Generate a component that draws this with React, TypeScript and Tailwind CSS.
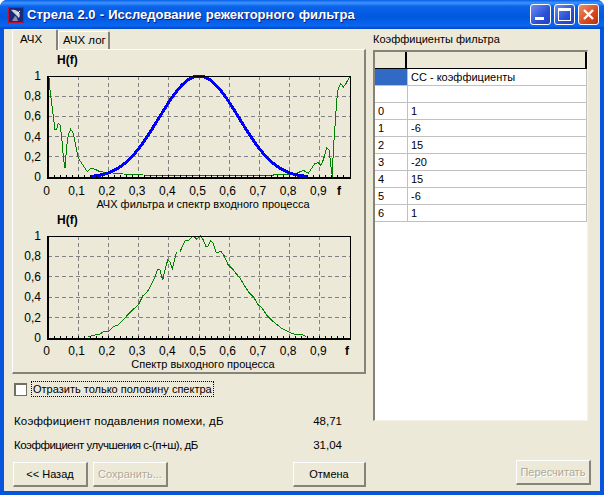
const green1: [number, number][] = [
  [147, 55], [150, 90], [155, 130], [160, 170], [165, 210], [170, 208], [175, 190], [180, 195], [185, 230], [190, 290],
  [195, 325], [200, 260], [205, 225], [212, 208], [220, 220], [228, 260], [235, 295], [245, 310], [255, 325], [262, 335],
  [272, 325], [285, 328], [300, 335], [330, 338], [370, 342], [430, 345], [500, 347], [600, 347],
];
const green1b: [number, number][] = [
  [60, 347], [280, 347], [280, 343], [330, 344], [350, 340], [370, 331], [385, 340], [395, 325], [405, 310], [415, 308], [422, 316],
  [430, 300], [440, 263], [447, 270], [453, 320], [457, 350], [460, 270], [465, 200], [470, 120], [475, 85], [482, 70],
  [490, 82], [497, 72], [510, 48],
];
const green2: [number, number][] = [
  [265, 380], [285, 375], [300, 372], [310, 365], [325, 365], [340, 350], [355, 345], [370, 330], [385, 312], [400, 298],
  [415, 285], [428, 258], [440, 248], [455, 222], [465, 200], [473, 178], [480, 180], [488, 210], [495, 180], [503, 150],
  [510, 155], [517, 177], [530, 125],
];
const green2b: [number, number][] = [
  [0, 125], [15, 92], [28, 90], [40, 78], [50, 88], [62, 77], [70, 90], [77, 108], [84, 108], [92, 92], [100, 100],
  [108, 127], [124, 125], [133, 138], [143, 162], [160, 180], [180, 205], [205, 245], [220, 260], [235, 285], [245, 292],
  [260, 316], [280, 335], [305, 355], [330, 368], [350, 375], [365, 373], [378, 380],
];

// zoom crop coords -> svg coords (svg origin is 13,52 for top chart and 13,212 for lower)
const top = (a: [number, number][], dx: number) =>
  a.map(([x, y]) => `${(dx + x / 3 - 13).toFixed(1)},${(60 + y / 3 - 52).toFixed(1)}`).join(" ");
const bottom = (a: [number, number][], dx: number) =>
  a.map(([x, y]) => `${(dx + x / 3 - 13).toFixed(1)},${(210 + y / 3 - 212).toFixed(1)}`).join(" ");

const blue = Array.from({ length: 91 }, (_, i) => {
  const f = 0.14 + (i * 0.72) / 90;
  const h = Math.pow(Math.sin(Math.PI * f), 6);
  return `${(35 + f * 302).toFixed(1)},${(125 - h * 101).toFixed(1)}`;
}).join(" ");

const rows = ["0", "1", "2", "3", "4", "5", "6"];
const vals = ["1", "-6", "15", "-20", "15", "-6", "1"];
const xLabels = ["0", "0,1", "0,2", "0,3", "0,4", "0,5", "0,6", "0,7", "0,8", "0,9"];
const yLabels = ["0", "0,2", "0,4", "0,6", "0,8", "1"];

function Chart({ caption, B, fx, children }: { caption: string; B: number; fx: number; children: React.ReactNode }) {
  const L = 35, R = 337, T = 24;
  const step = (B - T) / 5;
  return (
    <svg width="350" height="160" className="block" fontFamily="'Liberation Sans', sans-serif" fontSize="11" fill="#000">
      <text x="44" y="12" fontWeight="700" fontSize="12">H(f)</text>
      <g shapeRendering="crispEdges">
        {[1, 2, 3, 4, 5, 6, 7, 8, 9].map((i) => (
          <line key={i} x1={L + i * 30.2} x2={L + i * 30.2} y1={T} y2={B} stroke="#808080" strokeDasharray="4 3" />
        ))}
        {[1, 2, 3, 4].map((i) => (
          <line key={i} x1={L} x2={R} y1={B - i * step} y2={B - i * step} stroke="#808080" strokeDasharray="4 3" />
        ))}
        {children}
        {Array.from({ length: 51 }, (_, i) => (
          <line key={i} x1={L + i * 6.04} x2={L + i * 6.04} y1={B - 2} y2={B} stroke="#000" />
        ))}
        <line x1={L} x2={R} y1={T} y2={T} stroke="#000" />
        <line x1={R} x2={R} y1={T} y2={B} stroke="#000" />
        <rect x={L - 1} y={T} width="2" height={B - T + 1} fill="#000" />
        <rect x={L - 1} y={B} width={R - L + 2} height="2" fill="#000" />
      </g>
      {yLabels.map((t, i) => (
        <text key={t} x="28" y={B + 4 - i * step} textAnchor="end" fontSize="12">{t}</text>
      ))}
      {xLabels.map((t, i) => (
        <text key={t} x={L - 1.5 + i * 30.2} y="143" textAnchor="middle" fontSize="12">{t}</text>
      ))}
      <text x={fx} y="143" textAnchor="middle" fontWeight="700" fontSize="12">f</text>
      <text x="190" y="156" textAnchor="middle">{caption}</text>
    </svg>
  );
}

function Btn({ label, disabled, w = "w-[75px]" }: { label: string; disabled?: boolean; w?: string }) {
  return (
    <div
      className={`${w} h-[25px] flex items-center justify-center bg-[#ECE9D8] border-t border-l border-t-white border-l-white border-r-2 border-b-2 border-r-[#86847A] border-b-[#86847A] text-[11px] ${
        disabled ? "text-[#ACA899] [text-shadow:1px_1px_0_#fff]" : "text-black"
      }`}
    >
      {label}
    </div>
  );
}

function Row({ a, b, sel }: { a: string; b: string; sel?: boolean }) {
  return (
    <div className="flex h-[17px] text-[11px] leading-[16px] text-black">
      <div className={`w-[33px] pl-[3px] border-r border-b border-[#C0C0C0] ${sel ? "bg-[#316AC5]" : "bg-white"}`}>{a}</div>
      <div className="w-[179px] pl-[3px] border-r border-b border-[#C0C0C0] bg-white">{b}</div>
    </div>
  );
}

export default function App() {
  return (
    <div className="w-[604px] h-[495px] bg-white overflow-hidden font-['Liberation_Sans',sans-serif]">
      <div className="h-full flex flex-col rounded-t-[7px] overflow-hidden bg-[#0855DD]">
        {/* title bar */}
        <div className="h-[29px] shrink-0 flex items-center pl-[8px] pr-[5px] bg-[linear-gradient(180deg,#0A5FE8_0%,#3D95FF_10%,#0A63E8_22%,#0058E0_60%,#0A66F0_88%,#0048C8_100%)]">
          <svg width="16" height="16" viewBox="0 0 16 16" className="shrink-0">
            <rect x="0.5" y="0.5" width="15" height="15" fill="#1A2A78" stroke="#C01030" />
            <path d="M3 3 L11 11 Q13 7 10 4.5 Q7 2 3 3 Z" fill="#D0D4E0" />
            <path d="M7 9 L4 14 H10 L8.5 10 Z" fill="#8A90A8" />
            <path d="M9 7 L12 4" stroke="#fff" />
          </svg>
          <div className="ml-[3px] text-white font-bold text-[13px] [word-spacing:0.5px] [text-shadow:1px_1px_0_#0F1F80] whitespace-nowrap">
            Стрела 2.0 - Исследование режекторного фильтра
          </div>
          <div className="ml-auto flex gap-[3px]">
            <div className="w-[21px] h-[21px] rounded-[3px] border border-white bg-[linear-gradient(135deg,#6F8FF0,#2A50D8_60%,#2040C0)] flex items-end pl-[4px] pb-[4px]">
              <div className="w-[9px] h-[3px] bg-white" />
            </div>
            <div className="w-[21px] h-[21px] rounded-[3px] border border-white bg-[linear-gradient(135deg,#6F8FF0,#2A50D8_60%,#2040C0)] flex items-center justify-center">
              <div className="w-[13px] h-[13px] border border-white border-t-[3px]" />
            </div>
            <div className="w-[21px] h-[21px] rounded-[3px] border border-white bg-[linear-gradient(135deg,#E8906F,#D8481F_60%,#B83010)] flex items-center justify-center">
              <svg width="13" height="13" viewBox="0 0 13 13">
                <path d="M2 2 L11 11 M11 2 L2 11" stroke="#fff" strokeWidth="2.4" />
              </svg>
            </div>
          </div>
        </div>

        {/* client area */}
        <div className="flex-1 mx-[4px] mb-[4px] bg-[#ECE9D8] flex pl-[8px] pr-[9px] text-[11.5px] text-black">
          <div className="w-[355px] flex flex-col">
            <div className="flex h-[20px] items-end pt-[1px] relative z-10">
              <div className="w-[46px] h-[21px] -mb-[1px] pl-[7px] pt-[1px] bg-[#ECE9D8] border-t border-l border-white border-r-2 border-r-[#86847A] rounded-t-[2px]">
                АЧХ
              </div>
              <div className="w-[52px] h-[18px] pl-[4px] bg-[#ECE9D8] border-t border-l border-white border-r-2 border-r-[#86847A] rounded-t-[2px]">
                АЧХ лог
              </div>
            </div>
            <div className="w-[354px] h-[325px] bg-[#ECE9D8] border-t border-l border-white border-r-2 border-b-2 border-r-[#86847A] border-b-[#86847A] pt-[2px]">
              <Chart caption="АЧХ фильтра и спектр входного процесса" B={125} fx={326}>
                <polyline points={top(green1, 0)} fill="none" stroke="#008000" />
                <polyline points={top(green1b, 180)} fill="none" stroke="#008000" />
                <polyline points={blue} fill="none" stroke="#0000FF" strokeWidth="3" />
              </Chart>
              <Chart caption="Спектр выходного процесса" B={126} fx={334}>
                <polyline points={bottom(green2, 0)} fill="none" stroke="#008000" />
                <polyline points={bottom(green2b, 180)} fill="none" stroke="#008000" />
              </Chart>
            </div>
            <div className="flex items-center mt-[7px] ml-[2px] h-[16px]">
              <div className="w-[13px] h-[13px] bg-white border border-[#716F64] border-t-[2px] border-l-[2px]" />
              <div className="ml-[4px] px-[1px] border border-dotted border-black whitespace-nowrap text-[11px] leading-[14px]">
                Отразить только половину спектра
              </div>
            </div>
            <div className="flex justify-between mt-[17px] ml-[2px] pr-[24px] h-[14px] leading-[14px]">
              <span className="tracking-[0.15px]">Коэффициент подавления помехи, дБ</span>
              <span>48,71</span>
            </div>
            <div className="flex justify-between mt-[10px] ml-[2px] pr-[24px] h-[14px] leading-[14px]">
              <span className="tracking-[-0.5px]">Коэффициент улучшения с-(п+ш), дБ</span>
              <span>31,04</span>
            </div>
            <div className="flex mt-[10px] ml-[1px]">
              <Btn label="<< Назад" />
              <div className="ml-[5px]">
                <Btn label="Сохранить..." disabled />
              </div>
              <div className="ml-auto">
                <Btn label="Отмена" w="w-[73px]" />
              </div>
            </div>
          </div>

          <div className="ml-[7px] flex-1 flex flex-col">
            <div className="h-[21px] pt-[3px] text-[11px] leading-[14px] whitespace-nowrap">Коэффициенты фильтра</div>
            <div className="w-[215px] h-[371px] bg-white border-t-2 border-l-2 border-[#86847A] border-r border-b border-r-[#F5F3E8] border-b-[#F5F3E8]">
              <div className="flex h-[16px]">
                <div className="w-[32px] bg-[#ECE9D8] border-r-2 border-black" />
                <div className="w-[180px] bg-[#ECE9D8] border-r-2 border-b-0 border-black" />
              </div>
              <div className="h-px w-[212px] bg-black" />
              <Row a="" b="СС - коэффициенты" sel />
              <Row a="" b="" />
              {rows.map((r, i) => (
                <Row key={r} a={r} b={vals[i]} />
              ))}
            </div>
            <div className="mt-auto mb-[6px] ml-[143px]">
              <Btn label="Пересчитать" disabled />
            </div>
          </div>
        </div>
      </div>
    </div>
  );
}
